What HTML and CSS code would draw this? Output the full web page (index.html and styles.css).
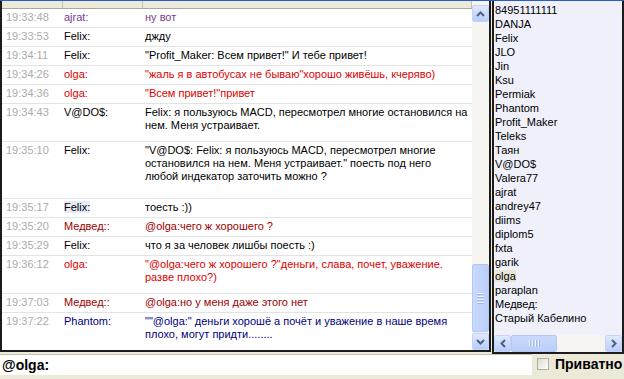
FILE: index.html
```html
<!DOCTYPE html>
<html lang="ru">
<head>
  <meta charset="UTF-8" />
  <title>Чат</title>
  <link rel="stylesheet" href="styles.css">
</head>
<body>

  <div class="topline"></div>

  <div class="main">

    <!-- Chat log -->
    <div class="chat">
      <div class="log">
        <div class="head">
          <span class="hc c-time"></span>
          <span class="hc c-nick"></span>
          <span class="hc c-msg"></span>
        </div>

        <div class="row purple"><span class="time">19:33:48</span><span class="nick">ajrat:</span><span class="msg">ну вот</span></div>
        <div class="row"><span class="time">19:33:53</span><span class="nick">Felix:</span><span class="msg">джду</span></div>
        <div class="row"><span class="time">19:34:11</span><span class="nick">Felix:</span><span class="msg">"Profit_Maker: Всем привет!" И тебе привет!</span></div>
        <div class="row red"><span class="time">19:34:26</span><span class="nick">olga:</span><span class="msg">"жаль я в автобусах не бываю"хорошо живёшь, кчеряво)</span></div>
        <div class="row red"><span class="time">19:34:36</span><span class="nick">olga:</span><span class="msg">"Всем привет!"привет</span></div>
        <div class="row two"><span class="time">19:34:43</span><span class="nick">V@DO$:</span><span class="msg">Felix: я пользуюсь MACD, пересмотрел многие остановился на<br>нем. Меня устраивает.</span></div>
        <div class="row three"><span class="time">19:35:10</span><span class="nick">Felix:</span><span class="msg">"V@DO$: Felix: я пользуюсь MACD, пересмотрел многие<br>остановился на нем. Меня устраивает." поесть под него<br>любой индекатор заточить можно ?</span></div>
        <div class="row"><span class="time">19:35:17</span><span class="nick"><span class="hl">Felix:</span></span><span class="msg">тоесть :))</span></div>
        <div class="row dark"><span class="time">19:35:20</span><span class="nick">Медвед::</span><span class="msg">@olga:чего ж хорошего ?</span></div>
        <div class="row"><span class="time">19:35:29</span><span class="nick">Felix:</span><span class="msg">что я за человек лишбы поесть :)</span></div>
        <div class="row two red"><span class="time">19:36:12</span><span class="nick">olga:</span><span class="msg">"@olga:чего ж хорошего ?"деньги, слава, почет, уважение.<br>разве плохо?)</span></div>
        <div class="row dark"><span class="time">19:37:03</span><span class="nick">Медвед::</span><span class="msg">@olga:но у меня даже этого нет</span></div>
        <div class="row two navy"><span class="time">19:37:22</span><span class="nick">Phantom:</span><span class="msg">""@olga:" деньги хорошё а почёт и уважение в наше время<br>плохо, могут придти........</span></div>
      </div>

      <div class="vscroll">
        <div class="sb-btn">
          <svg width="9" height="6" viewBox="0 0 9 6"><path d="M1 5 L4.5 1.5 L8 5" fill="none" stroke="#4d6185" stroke-width="2"/></svg>
        </div>
        <div class="sb-track">
          <div class="sb-thumb v"><span></span><span></span><span></span><span></span></div>
        </div>
        <div class="sb-btn">
          <svg width="9" height="6" viewBox="0 0 9 6"><path d="M1 1 L4.5 4.5 L8 1" fill="none" stroke="#4d6185" stroke-width="2"/></svg>
        </div>
      </div>
    </div>

    <!-- Users -->
    <div class="users">
      <div class="names">
        <div>84951111111</div>
        <div>DANJA</div>
        <div>Felix</div>
        <div>JLO</div>
        <div>Jin</div>
        <div>Ksu</div>
        <div>Permiak</div>
        <div>Phantom</div>
        <div>Profit_Maker</div>
        <div>Teleks</div>
        <div>Таян</div>
        <div>V@DO$</div>
        <div>Valera77</div>
        <div>ajrat</div>
        <div>andrey47</div>
        <div>diims</div>
        <div>diplom5</div>
        <div>fxta</div>
        <div>garik</div>
        <div><span class="sel">olga</span></div>
        <div>paraplan</div>
        <div>Медвед:</div>
        <div>Старый Кабелино</div>
      </div>

      <div class="hscroll">
        <div class="sb-btn">
          <svg width="6" height="9" viewBox="0 0 6 9"><path d="M5 1 L1.5 4.5 L5 8" fill="none" stroke="#4d6185" stroke-width="2"/></svg>
        </div>
        <div class="sb-track h">
          <div class="sb-thumb hz"><span></span><span></span><span></span><span></span></div>
        </div>
        <div class="sb-btn">
          <svg width="6" height="9" viewBox="0 0 6 9"><path d="M1 1 L4.5 4.5 L1 8" fill="none" stroke="#4d6185" stroke-width="2"/></svg>
        </div>
      </div>
    </div>

  </div>

  <!-- Input line -->
  <div class="bottom">
    <div class="input">@olga:</div>
    <label class="private"><span class="check"></span>Приватно</label>
  </div>

</body>
</html>
```

FILE: styles.css
```css
body {
  margin: 0;
  width: 624px;
  height: 379px;
  overflow: hidden;
  background: #ece9d8;
  font-family: "Liberation Sans", Arial, sans-serif;
  font-size: 11px;
  color: #000;
}

.topline {
  height: 1px;
  background: #2b5cc2;
}

.main {
  display: flex;
  gap: 1px;
  height: 353px;
}

/* chat log */
.chat {
  box-sizing: border-box;
  width: 491px;
  height: 351px;
  display: flex;
  border: 2px solid #1c1c1c;
  border-top: 0;
  background: #fff;
}

.log {
  flex: 1;
  overflow: hidden;
}

.head {
  display: flex;
  height: 7px;
  border-bottom: 1px solid #aca899;
  background: #ebeadb;
}

.hc {
  box-sizing: border-box;
  border-right: 1px solid #c7c5b2;
}

.c-time { width: 61px; }
.c-nick { width: 80px; }
.c-msg { flex: 1; }

.row {
  display: flex;
  box-sizing: border-box;
  height: 19px;
  padding-top: 2px;
  border-bottom: 1px solid #e3e3e3;
  line-height: 13px;
  white-space: nowrap;
}

.row.two { height: 38px; }
.row.three { height: 57px; }

.time {
  box-sizing: border-box;
  width: 60px;
  padding-left: 4px;
  color: #ababab;
}

.nick {
  box-sizing: border-box;
  width: 80px;
  padding-left: 2px;
}

.msg {
  flex: 1;
  padding-left: 3px;
}

.hl { background: #e7ebf7; }

.purple { color: #7a3d8c; }
.red { color: #dd0000; }
.dark { color: #9c0000; }
.navy { color: #000080; }

/* scrollbars */
.vscroll {
  width: 17px;
  display: flex;
  flex-direction: column;
  padding-top: 4px;
  background: #f6f5f1;
}

.sb-btn {
  box-sizing: border-box;
  width: 17px;
  height: 17px;
  flex: none;
  display: flex;
  align-items: center;
  justify-content: center;
  border: 1px solid #c3d3fd;
  border-radius: 2px;
  background: linear-gradient(#e0e9fe, #b9cdfa);
}

.sb-track {
  flex: 1;
  display: flex;
  flex-direction: column;
  justify-content: flex-end;
}

.sb-thumb {
  box-sizing: border-box;
  display: flex;
  align-items: center;
  justify-content: center;
  gap: 1px;
  border: 1px solid #b4c8f6;
  border-radius: 2px;
  background: linear-gradient(90deg, #cad9fd, #bacff9);
}

.sb-thumb.v {
  height: 68px;
  margin-bottom: 1px;
  flex-direction: column;
}

.sb-thumb.v span {
  width: 7px;
  height: 1px;
  background: #eef3fe;
  border-bottom: 1px solid #9fb8ef;
}

/* user list */
.users {
  flex: 1;
  box-sizing: border-box;
  height: 353px;
  display: flex;
  flex-direction: column;
  border: 2px solid #1c1c1c;
  border-top: 0;
  background: #eff0fa;
}

.names {
  flex: 1;
  padding: 2px 0 0 1px;
  line-height: 14px;
  white-space: nowrap;
}

.sel { background: #e8e5d6; }

.hscroll {
  height: 17px;
  display: flex;
  background: #f6f5f1;
}

.sb-track.h {
  flex-direction: row;
  justify-content: flex-start;
}

.sb-thumb.hz {
  width: 46px;
  background: linear-gradient(#cad9fd, #bacff9);
}

.sb-thumb.hz span {
  width: 1px;
  height: 7px;
  background: #eef3fe;
  border-right: 1px solid #9fb8ef;
}

/* input line */
.bottom {
  display: flex;
  height: 25px;
}

.input {
  box-sizing: border-box;
  width: 532px;
  height: 21px;
  padding: 2px 0 0 2px;
  border-top: 1px solid #c5c2b2;
  background: #fff;
  font-size: 14px;
  font-weight: bold;
  line-height: 16px;
}

.private {
  display: flex;
  align-items: center;
  gap: 6px;
  height: 20px;
  padding-left: 5px;
  font-size: 14px;
  font-weight: bold;
}

.check {
  width: 10px;
  height: 10px;
  border: 1px solid #b2b0a6;
  background: linear-gradient(135deg, #dcdbd4, #fff);
}
```
